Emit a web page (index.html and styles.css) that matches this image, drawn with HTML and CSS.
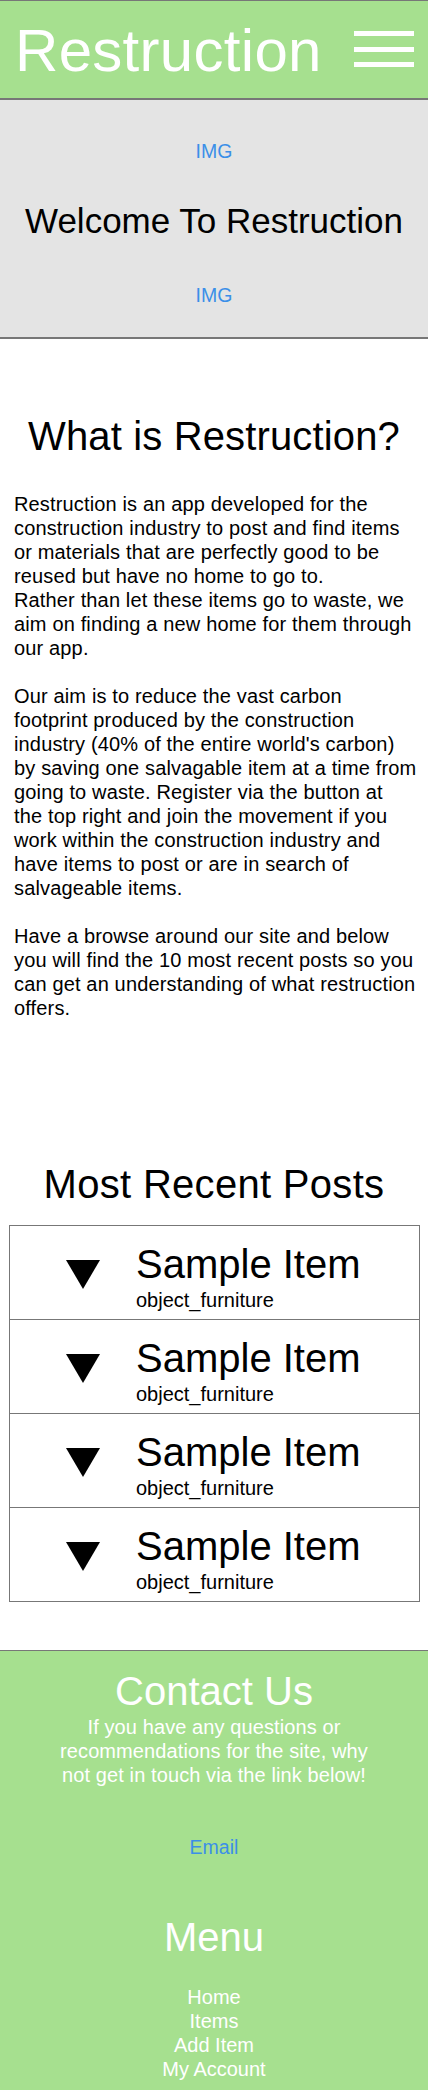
FILE: index.html
```html
<!DOCTYPE html>
<html lang="en">
<head>
<meta charset="utf-8">
<meta name="viewport" content="width=device-width, initial-scale=1">
<title>Restruction</title>
<link rel="stylesheet" href="styles.css">
</head>
<body>
<header class="site-header">
  <h1 class="brand">Restruction</h1>
  <button class="menu-toggle" aria-label="Menu">
    <span class="bar"></span>
    <span class="bar"></span>
    <span class="bar"></span>
  </button>
</header>

<section class="hero">
  <a class="img-link" href="#">IMG</a>
  <h2 class="hero-title">Welcome To Restruction</h2>
  <a class="img-link" href="#">IMG</a>
</section>

<section class="about">
  <h2 class="section-title">What is Restruction?</h2>
  <p class="about-text">Restruction is an app developed for the<br>construction industry to post and find items<br>or materials that are perfectly good to be<br>reused but have no home to go to.<br>Rather than let these items go to waste, we<br>aim on finding a new home for them through<br>our app.<br><br>Our aim is to reduce the vast carbon<br>footprint produced by the construction<br>industry (40% of the entire world's carbon)<br>by saving one salvagable item at a time from<br>going to waste. Register via the button at<br>the top right and join the movement if you<br>work within the construction industry and<br>have items to post or are in search of<br>salvageable items.<br><br>Have a browse around our site and below<br>you will find the 10 most recent posts so you<br>can get an understanding of what restruction<br>offers.</p>
</section>

<section class="recent">
  <h2 class="section-title recent-title">Most Recent Posts</h2>
  <ul class="post-list">
    <li class="post">
      <svg class="post-arrow" width="34" height="29" viewBox="0 0 34 29"><polygon points="0,0 34,0 17,29"/></svg>
      <div class="post-info">
        <div class="post-name">Sample Item</div>
        <div class="post-cat">object_furniture</div>
      </div>
    </li>
    <li class="post">
      <svg class="post-arrow" width="34" height="29" viewBox="0 0 34 29"><polygon points="0,0 34,0 17,29"/></svg>
      <div class="post-info">
        <div class="post-name">Sample Item</div>
        <div class="post-cat">object_furniture</div>
      </div>
    </li>
    <li class="post">
      <svg class="post-arrow" width="34" height="29" viewBox="0 0 34 29"><polygon points="0,0 34,0 17,29"/></svg>
      <div class="post-info">
        <div class="post-name">Sample Item</div>
        <div class="post-cat">object_furniture</div>
      </div>
    </li>
    <li class="post">
      <svg class="post-arrow" width="34" height="29" viewBox="0 0 34 29"><polygon points="0,0 34,0 17,29"/></svg>
      <div class="post-info">
        <div class="post-name">Sample Item</div>
        <div class="post-cat">object_furniture</div>
      </div>
    </li>
  </ul>
</section>

<footer class="site-footer">
  <h2 class="footer-title">Contact Us</h2>
  <p class="contact-text">If you have any questions or recommendations  for the site, why not get in touch via the link below!</p>
  <a class="email-link" href="#">Email</a>
  <h2 class="footer-title menu-title">Menu</h2>
  <nav class="footer-nav">
    <a href="#">Home</a>
    <a href="#">Items</a>
    <a href="#">Add Item</a>
    <a href="#">My Account</a>
  </nav>
</footer>
</body>
</html>
```

FILE: styles.css
```css
* {
  box-sizing: border-box;
}

html, body {
  margin: 0;
  padding: 0;
  background: #ffffff;
}

body {
  font-family: "Liberation Sans", Arial, Helvetica, sans-serif;
  color: #000;
  width: 428px;
}

/* Header */
.site-header {
  display: flex;
  justify-content: space-between;
  align-items: flex-start;
  height: 100px;
  padding: 20px 14px 0 15px;
  background: #a6e08f;
  border-top: 1px solid #777;
  border-bottom: 2px solid #777;
}

.brand {
  margin: 0;
  font-size: 60px;
  line-height: 60px;
  font-weight: normal;
  letter-spacing: 0.3px;
  color: #fff;
}

.menu-toggle {
  display: flex;
  flex-direction: column;
  gap: 10.5px;
  width: 60px;
  margin-top: 10px;
  padding: 0;
  border: 0;
  background: transparent;
}

.bar {
  display: block;
  width: 60px;
  height: 5px;
  background: #fff;
}

/* Hero */
.hero {
  display: flex;
  flex-direction: column;
  align-items: center;
  height: 239px;
  padding: 39px 0 30px;
  background: #e4e4e4;
  border-bottom: 2px solid #777;
}

.img-link {
  font-size: 19.5px;
  line-height: 24px;
  color: #3b8fe8;
  text-decoration: none;
}

.hero-title {
  margin: 37px 0 42px;
  font-size: 35px;
  line-height: 41px;
  font-weight: normal;
}

/* Sections */
.section-title {
  margin: 0;
  font-size: 40px;
  line-height: 48px;
  font-weight: normal;
  letter-spacing: 0.15px;
  text-align: center;
}

.about {
  padding-top: 73px;
}

.about-text {
  margin: 32px 0 0;
  padding: 0 6px 0 14px;
  font-size: 20px;
  line-height: 24px;
  letter-spacing: 0.15px;
  white-space: nowrap;
}

.recent {
  padding-top: 140px;
}

.recent-title {
  letter-spacing: 0.3px;
}

.post-list {
  list-style: none;
  margin: 17px 8px 0 9px;
  padding: 0;
  border: 1px solid #777;
  border-bottom: 0;
}

.post {
  display: flex;
  align-items: flex-start;
  height: 94px;
  padding: 14px 0 0 56px;
  border-bottom: 1px solid #777;
}

.post-arrow {
  flex: none;
  margin-top: 20px;
  fill: #000;
}

.post-info {
  margin-left: 36px;
}

.post-name {
  font-size: 40px;
  line-height: 48px;
}

.post-cat {
  font-size: 20px;
  line-height: 24px;
}

/* Footer */
.site-footer {
  display: flex;
  flex-direction: column;
  align-items: center;
  margin-top: 48px;
  padding: 16px 0 9px;
  background: #a6e08f;
  border-top: 1px solid #777;
  border-bottom: 1px solid #777;
  color: #fff;
  text-align: center;
}

.footer-title {
  margin: 0;
  font-size: 40px;
  line-height: 48px;
  font-weight: normal;
}

.contact-text {
  margin: 0;
  max-width: 330px;
  font-size: 20px;
  line-height: 24px;
  letter-spacing: 0.1px;
}

.email-link {
  margin-top: 48px;
  font-size: 19.5px;
  line-height: 24px;
  color: #3b8fe8;
  text-decoration: none;
}

.menu-title {
  margin-top: 54px;
}

.footer-nav {
  display: flex;
  flex-direction: column;
  align-items: center;
  margin-top: 24px;
}

.footer-nav a {
  font-size: 20px;
  line-height: 24px;
  color: #fff;
  text-decoration: none;
}
```
